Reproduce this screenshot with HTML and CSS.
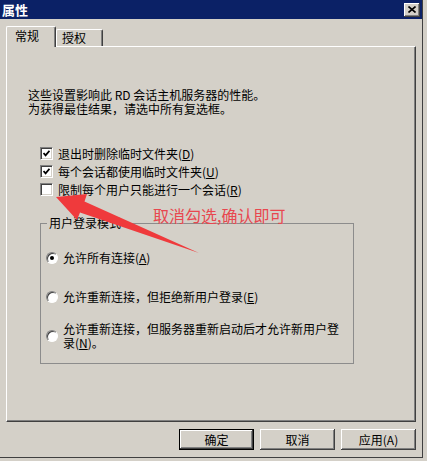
FILE: index.html
```html
<!DOCTYPE html>
<html>
    <head>
        <meta charset="utf-8">
        <link rel="stylesheet" href="styles.css">
    </head>
    <body>
        <div class="window">
            <div class="titlebar">
                <span class="title">属性</span>
                <span class="close">
                    <svg width="8" height="7" viewBox="0 0 8 7"><path d="M0.5 0.5 L7.5 6.5 M7.5 0.5 L0.5 6.5" stroke="#000" stroke-width="1.6" fill="none"/></svg>
                </span>
            </div>

            <div class="tabs">
                <div class="tab active">常规</div>
                <div class="tab">授权</div>
            </div>

            <div class="panel">
                <p class="intro">这些设置影响此 RD 会话主机服务器的性能。<br>为获得最佳结果，请选中所有复选框。</p>

                <div class="checks">
                    <div class="row">
                        <span class="check"><svg width="7" height="7" viewBox="0 0 7 7"><path d="M0.5 3 L2.6 5.3 L6.5 0.8" stroke="#000" stroke-width="1.8" fill="none"/></svg></span>
                        <span>退出时删除临时文件夹(<u>D</u>)</span>
                    </div>
                    <div class="row">
                        <span class="check"><svg width="7" height="7" viewBox="0 0 7 7"><path d="M0.5 3 L2.6 5.3 L6.5 0.8" stroke="#000" stroke-width="1.8" fill="none"/></svg></span>
                        <span>每个会话都使用临时文件夹(<u>U</u>)</span>
                    </div>
                    <div class="row">
                        <span class="check"></span>
                        <span>限制每个用户只能进行一个会话(<u>R</u>)</span>
                    </div>
                </div>

                <fieldset class="group">
                    <legend>用户登录模式</legend>
                    <div class="radio-row r1">
                        <span class="radio on"></span>
                        <span class="radio-label">允许所有连接(<u>A</u>)</span>
                    </div>
                    <div class="radio-row r2">
                        <span class="radio"></span>
                        <span class="radio-label">允许重新连接，但拒绝新用户登录(<u>E</u>)</span>
                    </div>
                    <div class="radio-row r3">
                        <span class="radio"></span>
                        <span class="radio-label">允许重新连接，但服务器重新启动后才允许新用户登录(<u>N</u>)。</span>
                    </div>
                </fieldset>
            </div>

            <div class="buttons">
                <button class="btn default">确定</button>
                <button class="btn">取消</button>
                <button class="btn">应用(A)</button>
            </div>

            <!-- red annotation drawn over the dialog -->
            <svg class="arrow" width="423" height="458" viewBox="0 0 423 458">
                <polygon points="56,197 87,194 84.5,201.5 199,253 80,212.5 77,220" fill="#ef3a3c"/>
            </svg>
            <div class="note">取消勾选,确认即可</div>
        </div>
    </body>
</html>
```

FILE: styles.css
```css
body
{
    margin: 0;
    background: #d4d0c8;
    font-family: "Noto Sans CJK SC", "DejaVu Sans", sans-serif;
    font-size: 12px;
    color: #000;
}

.window
{
    position: relative;
    width: 422px;
    height: 457px;
    background: #d4d0c8;
    border-right: 1px solid #404040;
    border-bottom: 1px solid #404040;
}

.titlebar
{
    height: 19px;
    background: #0b2166;
    display: flex;
    align-items: center;
    justify-content: space-between;
    padding: 0 2px 0 2px;
}

.title
{
    color: #fff;
    font-weight: bold;
    font-size: 13px;
    line-height: 19px;
}

.close
{
    width: 16px;
    height: 14px;
    background: #d4d0c8;
    box-shadow: inset -1px -1px #404040, inset 1px 1px #fff, inset -2px -2px #808080;
    display: flex;
    align-items: center;
    justify-content: center;
}

.tabs
{
    display: flex;
    align-items: flex-end;
    height: 20px;
    margin-top: 7px;
    padding-left: 6px;
}

.tab
{
    box-sizing: border-box;
    width: 47px;
    height: 17px;
    border-top: 1px solid #fff;
    border-left: 1px solid #fff;
    border-right: 1px solid #404040;
    border-radius: 2px 2px 0 0;
    box-shadow: inset -1px 0 #808080;
    padding-left: 5px;
    line-height: 16px;
}

.tab.active
{
    position: relative;
    z-index: 1;
    width: 50px;
    height: 21px;
    margin-bottom: -1px;
    background: #d4d0c8;
    padding-left: 8px;
    line-height: 18px;
}

.panel
{
    box-sizing: border-box;
    width: 410px;
    height: 376px;
    margin-left: 6px;
    border-top: 1px solid #fff;
    border-left: 1px solid #fff;
    border-right: 1px solid #404040;
    border-bottom: 1px solid #404040;
    box-shadow: inset -1px -1px #808080;
    padding: 41px 0 0 21px;
}

.intro
{
    margin: 0;
    line-height: 14px;
}

.checks
{
    margin-top: 28px;
}

.row
{
    display: flex;
    align-items: center;
    gap: 5px;
    height: 18px;
    margin-left: 12px;
}

.check
{
    box-sizing: border-box;
    width: 13px;
    height: 13px;
    background: #fff;
    border-top: 1px solid #808080;
    border-left: 1px solid #808080;
    border-right: 1px solid #fff;
    border-bottom: 1px solid #fff;
    box-shadow: inset 1px 1px #404040, inset -1px -1px #d4d0c8;
    display: flex;
    align-items: center;
    justify-content: center;
}

.group
{
    box-sizing: border-box;
    width: 314px;
    height: 148px;
    margin: 18px 0 0 12px;
    padding: 0;
    border: 1px solid #8c8c8c;
    min-width: 0;
}

.group legend
{
    margin-left: 6px;
    padding: 0 2px;
    line-height: 14px;
}

.radio-row
{
    display: flex;
    align-items: center;
    gap: 5px;
    margin-left: 5px;
}

.r1 { margin-top: 21px; }
.r2 { margin-top: 25px; }
.r3 { margin-top: 18px; }

.radio
{
    box-sizing: border-box;
    flex: 0 0 12px;
    width: 12px;
    height: 12px;
    border-radius: 50%;
    background: #fff;
    border: 1px solid;
    border-color: #808080 #fff #fff #808080;
    box-shadow: inset 1px 1px #404040;
    display: flex;
    align-items: center;
    justify-content: center;
}

.radio.on::after
{
    content: "";
    width: 4px;
    height: 4px;
    border-radius: 50%;
    background: #000;
}

.radio-label
{
    max-width: 280px;
    line-height: 14px;
}

.buttons
{
    display: flex;
    justify-content: flex-end;
    gap: 6px;
    margin-top: 7px;
    padding-right: 6px;
}

.btn
{
    width: 75px;
    height: 21px;
    padding: 0;
    border: none;
    background: #d4d0c8;
    font: inherit;
    color: #000;
    box-shadow: inset -1px -1px #404040, inset 1px 1px #fff, inset -2px -2px #808080;
}

.btn.default
{
    box-shadow: inset 0 0 0 1px #000, inset -2px -2px #404040, inset 2px 2px #fff, inset -3px -3px #808080;
}

.arrow
{
    position: absolute;
    left: 0;
    top: 0;
    pointer-events: none;
}

.note
{
    position: absolute;
    left: 153px;
    top: 206px;
    color: #e8474f;
    font-size: 16px;
    line-height: 18px;
    pointer-events: none;
}
```
